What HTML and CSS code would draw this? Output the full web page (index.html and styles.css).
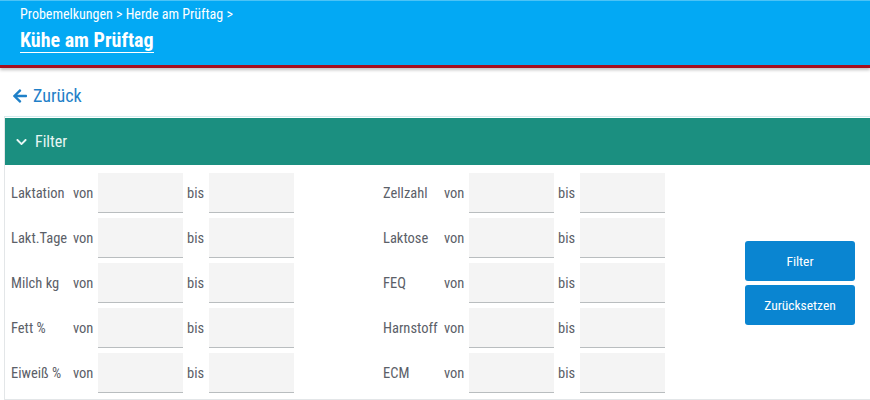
FILE: index.html
```html
<!DOCTYPE html>
<html lang="de">
<head>
  <meta charset="UTF-8">
  <title>Kühe am Prüftag</title>
  <link rel="stylesheet" href="styles.css">
</head>
<body>
  <header class="topbar">
    <div class="crumbs">Probemelkungen &gt; Herde am Prüftag &gt;</div>
    <h1 class="page-title">Kühe am Prüftag</h1>
  </header>
  <main>
    <a class="back-link" href="#">
      <svg class="back-icon" viewBox="0 0 448 512" width="16" height="16"><path fill="currentColor" d="M257.5 445.1l-22.2 22.2c-9.4 9.4-24.6 9.4-33.9 0L7 273c-9.4-9.4-9.4-24.6 0-33.9L201.4 44.7c9.4-9.4 24.6-9.4 33.9 0l22.2 22.2c9.5 9.5 9.3 25-.4 34.3L136.6 216H424c13.3 0 24 10.7 24 24v32c0 13.3-10.7 24-24 24H136.6l120.5 114.8c9.8 9.3 10 24.8.4 34.3z"/></svg>
      Zurück
    </a>
    <section class="panel">
      <div class="panel-head">
        <svg class="chevron" viewBox="0 0 448 512" width="11" height="12"><path fill="currentColor" d="M207.029 381.476L12.686 187.132c-9.373-9.373-9.373-24.569 0-33.941l22.667-22.667c9.357-9.357 24.522-9.375 33.901-.04L224 284.505l154.745-154.021c9.379-9.335 24.544-9.317 33.901.04l22.667 22.667c9.373 9.373 9.373 24.569 0 33.941L240.971 381.476c-9.373 9.372-24.569 9.372-33.942 0z"/></svg>
        Filter
      </div>
      <div class="panel-body">
        <div class="field-grid">
          <span class="lbl">Laktation</span><span class="lbl">von</span><input class="inp" type="text"><span class="lbl bis">bis</span><input class="inp" type="text">
          <span class="lbl">Lakt.Tage</span><span class="lbl">von</span><input class="inp" type="text"><span class="lbl bis">bis</span><input class="inp" type="text">
          <span class="lbl">Milch kg</span><span class="lbl">von</span><input class="inp" type="text"><span class="lbl bis">bis</span><input class="inp" type="text">
          <span class="lbl">Fett %</span><span class="lbl">von</span><input class="inp" type="text"><span class="lbl bis">bis</span><input class="inp" type="text">
          <span class="lbl">Eiweiß %</span><span class="lbl">von</span><input class="inp" type="text"><span class="lbl bis">bis</span><input class="inp" type="text">
        </div>
        <div class="field-grid right">
          <span class="lbl">Zellzahl</span><span class="lbl">von</span><input class="inp" type="text"><span class="lbl bis">bis</span><input class="inp" type="text">
          <span class="lbl">Laktose</span><span class="lbl">von</span><input class="inp" type="text"><span class="lbl bis">bis</span><input class="inp" type="text">
          <span class="lbl">FEQ</span><span class="lbl">von</span><input class="inp" type="text"><span class="lbl bis">bis</span><input class="inp" type="text">
          <span class="lbl">Harnstoff</span><span class="lbl">von</span><input class="inp" type="text"><span class="lbl bis">bis</span><input class="inp" type="text">
          <span class="lbl">ECM</span><span class="lbl">von</span><input class="inp" type="text"><span class="lbl bis">bis</span><input class="inp" type="text">
        </div>
        <div class="actions">
          <button class="btn">Filter</button>
          <button class="btn">Zurücksetzen</button>
        </div>
      </div>
    </section>
  </main>
</body>
</html>
```

FILE: styles.css
```css
* {
  box-sizing: border-box;
}
body {
  margin: 0;
  font-family: "Roboto Condensed", "Liberation Sans Narrow", "DejaVu Sans Condensed", Roboto, sans-serif;
  background: #fff;
  color: #5b6068;
}
.topbar {
  background: #03a9f4;
  border-top: 1px solid #4cc3f6;
  border-bottom: 3px solid #a50f1e;
  box-shadow: 0 2px 3px rgba(0,0,0,0.25);
  padding: 5px 20px 0;
  height: 68px;
  color: #fff;
}
.crumbs {
  font-size: 14px;
  line-height: 17px;
}
.page-title {
  display: inline-block;
  margin: 6px 0 0;
  font-size: 20px;
  font-weight: 700;
  line-height: 22px;
  padding-bottom: 1px;
  border-bottom: 1px solid #fff;
}
main {
  padding: 0 0 0 4px;
}
.back-link {
  display: flex;
  align-items: center;
  gap: 5px;
  height: 48px;
  padding: 6px 0 0 8px;
  color: #1f80c8;
  font-size: 18px;
  text-decoration: none;
}
.back-icon {
  margin-top: 1px;
}
.panel {
  border: 1px solid #e3e6e8;
  border-top-color: #d2ecee;
  border-right: none;
}
.panel-head {
  margin-top: 1px;
  height: 47px;
  background: #1b8f80;
  color: #e9f6f4;
  font-size: 16px;
  display: flex;
  align-items: center;
  gap: 8px;
  padding-left: 11px;
}
.panel-body {
  display: flex;
  align-items: center;
  padding: 8px 0 6px 6px;
}
.field-grid {
  display: grid;
  grid-template-columns: 62px 25px 85px 26px 85px;
  row-gap: 5px;
  align-items: center;
}
.field-grid.right {
  margin-left: 89px;
  grid-template-columns: 61px 25px 85px 26px 85px;
}
.lbl {
  font-size: 14.5px;
  white-space: nowrap;
}
.bis {
  padding-left: 4px;
}
.inp {
  height: 40px;
  width: 85px;
  border: none;
  border-bottom: 1px solid #b9bdbf;
  background: #f4f4f4;
  font: inherit;
  padding: 0 6px;
}
.actions {
  margin-left: 80px;
  display: flex;
  flex-direction: column;
  gap: 4px;
}
.btn {
  width: 110px;
  height: 40px;
  border: none;
  border-radius: 3px;
  background: #0a85d1;
  color: #fff;
  font: inherit;
  font-size: 13.5px;
}
```
